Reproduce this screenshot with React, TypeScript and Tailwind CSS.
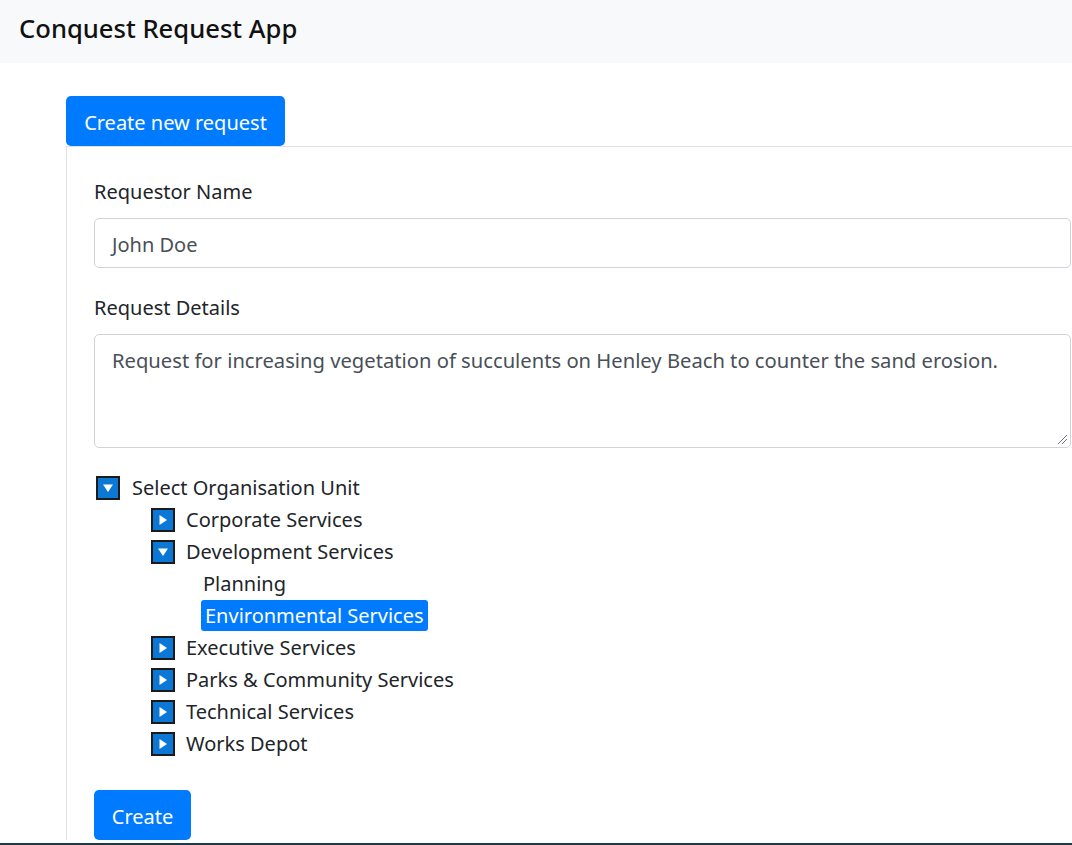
import React from "react";

const font = { fontFamily: '"Noto Sans", "Open Sans", sans-serif' };

function Toggle({ open }: { open: boolean }) {
  return (
    <span className="inline-flex h-[24px] w-[24px] shrink-0 items-center justify-center border-2 border-[#1b1b1b] bg-[#0a78d4]">
      <svg width="12" height="12" viewBox="0 0 12 12">
        {open ? (
          <polygon points="1,2.5 11,2.5 6,10" fill="#fff" />
        ) : (
          <polygon points="2.5,1 10,6 2.5,11" fill="#fff" />
        )}
      </svg>
    </span>
  );
}

function Row({ children }: { children: React.ReactNode }) {
  return <div className="flex h-[32px] items-center pt-[1px]">{children}</div>;
}

export default function App() {
  const after = ["Executive Services", "Parks & Community Services", "Technical Services", "Works Depot"];
  return (
    <div className="flex h-[845px] w-[1072px] flex-col overflow-hidden bg-white text-[#212529]" style={font}>
      <div className="flex-1 overflow-hidden">
        <header className="flex h-[63px] items-center bg-[#f8f9fa] px-[19px] pb-[5px]">
          <span className="text-[25.6px] font-medium text-[#111]">Conquest Request App</span>
        </header>
        <main className="pl-[66px] pt-[33px]">
          <button className="h-[50px] w-[219px] rounded-[5px] bg-[#007bff] pt-[4px] text-[20px] text-white">
            Create new request
          </button>
          <div className="w-[1100px] border-l border-t border-[#dee2e6] pl-[27px] pt-[29px]">
            <label className="block h-[32px] leading-[32px] text-[20px]">Requestor Name</label>
            <div className="mt-[10px] flex h-[50px] w-[977px] items-center rounded-[5px] border border-[#ced4da] px-[17px] pt-[3px] text-[20px] text-[#495057]">
              John Doe
            </div>
            <label className="mt-[24px] block h-[32px] leading-[32px] text-[20px]">Request Details</label>
            <div className="relative mt-[10px] h-[114px] w-[977px] rounded-[5px] border border-[#ced4da] px-[17px] pt-[10px] text-[20.2px] leading-[30px] text-[#495057]">
              Request for increasing vegetation of succulents on Henley Beach to counter the sand erosion.
              <svg className="absolute bottom-[2px] right-[2px]" width="12" height="12" viewBox="0 0 12 12">
                <line x1="2" y1="11" x2="11" y2="2" stroke="#777" strokeWidth="1" />
                <line x1="6" y1="11" x2="11" y2="6" stroke="#777" strokeWidth="1" />
              </svg>
            </div>
            <div className="mt-[23px] text-[20px]">
              <Row>
                <span className="ml-[2px] -mt-[1px]"><Toggle open /></span>
                <span className="ml-[12px]">Select Organisation Unit</span>
              </Row>
              <div className="pl-[57px]">
                <Row>
                  <span className="-mt-[1px]"><Toggle open={false} /></span>
                  <span className="ml-[11px]">Corporate Services</span>
                </Row>
                <Row>
                  <span className="-mt-[1px]"><Toggle open /></span>
                  <span className="ml-[11px]">Development Services</span>
                </Row>
                <div className="pl-[50px]">
                  <Row>
                    <span className="ml-[2px]">Planning</span>
                  </Row>
                  <div className="flex h-[32px] items-center">
                    <span className="flex h-[31px] items-center rounded-[3px] bg-[#007bff] px-[4px] pt-[2px] text-white">
                      Environmental Services
                    </span>
                  </div>
                </div>
                {after.map((t) => (
                  <Row key={t}>
                    <span className="-mt-[1px]"><Toggle open={false} /></span>
                    <span className="ml-[11px]">{t}</span>
                  </Row>
                ))}
              </div>
            </div>
            <button className="mt-[31px] h-[50px] w-[97px] rounded-[5px] bg-[#007bff] pt-[4px] text-[20px] text-white">
              Create
            </button>
          </div>
        </main>
      </div>
      <div className="h-[2px] bg-[#1d3a48]" />
    </div>
  );
}
